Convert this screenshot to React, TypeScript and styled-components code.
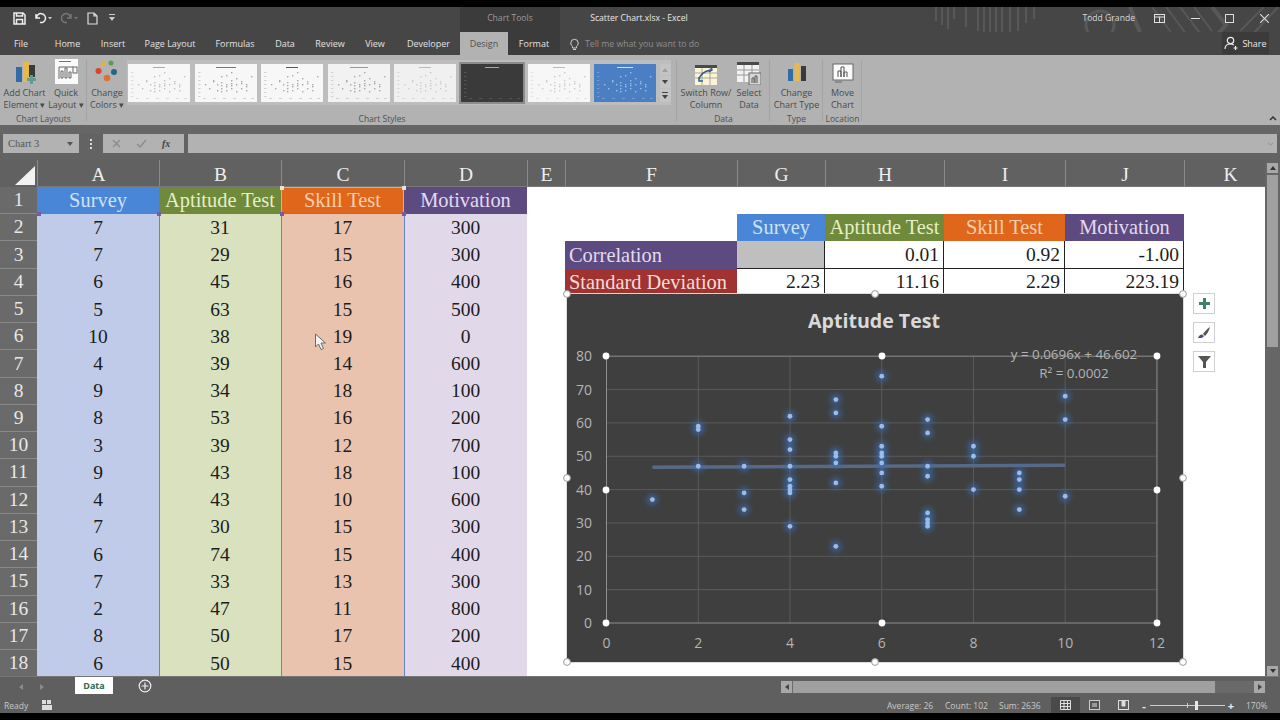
import React from "react";
import styled, { createGlobalStyle } from "styled-components";

const Global = createGlobalStyle`
  html, body { margin: 0; padding: 0; background: #000; }
  #root { width: 1280px; height: 720px; overflow: hidden; }
  * { box-sizing: border-box; }
`;

const UI = `"Open Sans", "Noto Sans", "Liberation Sans", sans-serif`;
const SERIF = `"Liberation Serif", "Times New Roman", serif`;

const Screen = styled.div`
  width: 1280px; height: 720px; background: #000; padding: 7px 0;
  display: flex; flex-direction: column; font-family: ${UI}; overflow: hidden;
`;

const TitleBar = styled.div`
  height: 25px; background: #464646; display: flex; align-items: center; padding-bottom: 3px;
  position: relative; color: #e6e6e6; font-size: 8.6px; flex: none;
`;
const QuickAccess = styled.div`
  width: 460px; flex: none; display: flex; align-items: center; gap: 0; padding-left: 13px; height: 100%;
`;
const QuickBtn = styled.span<{ $w: number }>`
  width: ${p => p.$w}px; display: flex; align-items: center; flex: none;
`;
const ToolsLabel = styled.div`
  width: 100px; height: 25px; margin-bottom: -3px; padding-bottom: 3px; background: #3b3b3b; color: #9a9a9a; display: flex;
  align-items: center; justify-content: center; flex: none;
`;
const DocTitle = styled.div`
  width: 158px; text-align: center; color: #e8e8e8; flex: none;
`;
const Deco = styled.svg`
  position: absolute; left: 930px; top: 0; width: 350px; height: 48px; pointer-events: none;
`;
const WindowArea = styled.div`
  margin-left: auto; display: flex; align-items: center; position: relative; height: 100%;
`;
const UserName = styled.span`
  color: #d8d8d8; margin-right: 3px; white-space: nowrap;
`;
const WinBtn = styled.span<{ $w: number }>`
  width: ${p => p.$w}px; display: flex; justify-content: center; align-items: center;
`;

const TabBar = styled.div`
  height: 23px; background: #464646; display: flex; align-items: stretch; flex: none;
  font-size: 9px; color: #e2e2e2; position: relative;
`;
const Tab = styled.div<{ $w: number; $state?: "active" | "context" }>`
  width: ${p => p.$w}px; flex: none; display: flex; align-items: center; justify-content: center;
  background: ${p => (p.$state === "active" ? "#b2b2b2" : p.$state === "context" ? "#3b3b3b" : "transparent")};
  color: ${p => (p.$state === "active" ? "#505050" : "#e2e2e2")};
`;
const TellMe = styled.div`
  display: flex; align-items: center; gap: 6px; margin-left: 10px; color: #8e8e8e; font-size: 8.7px; position: relative;
`;
const ShareBtn = styled.div`
  position: absolute; left: 1222px; top: 0; width: 47px; height: 22px; background: #3b3b3b;
  display: flex; align-items: center; justify-content: center; gap: 3px; color: #e8e8e8;
`;

const Ribbon = styled.div`
  height: 70px; background: #b2b2b2; display: flex; flex: none; position: relative; color: #4a4a4a; font-size: 9px;
`;
const Group = styled.div<{ $w: number }>`
  width: ${p => p.$w}px; flex: none; display: flex; flex-direction: column; height: 100%;
  position: relative;
  &::after {
    content: ""; position: absolute; right: 0; top: 5px; bottom: 4px; width: 1px; background: #a3a3a3;
  }
`;
const GroupBody = styled.div`
  flex: 1; display: flex; align-items: flex-start; min-height: 0;
`;
const GroupLabel = styled.div`
  height: 13px; line-height: 13px; text-align: center; color: #4f4f4f; font-size: 8.5px; white-space: nowrap;
`;
const RibbonBtn = styled.div<{ $w: number }>`
  width: ${p => p.$w}px; flex: none; display: flex; flex-direction: column; align-items: center;
  padding-top: 4px; line-height: 12px; text-align: center; white-space: nowrap;
`;
const IconSlot = styled.div`
  height: 28px; display: flex; align-items: flex-start;
`;
const Gallery = styled.div`
  display: flex; margin-top: 5px; background: #bdbdbd; padding: 4px 0 3px 1px; height: 45px; align-items: stretch;
`;
const Thumb = styled.div<{ $bg: string; $sel?: boolean }>`
  width: 62px; height: 38px; margin-right: 4.6px; background: ${p => p.$bg}; flex: none; line-height: 0;
  outline: ${p => (p.$sel ? "2px solid #8c8c8c" : "none")};
`;
const GalleryScroll = styled.div`
  width: 11px; display: flex; flex-direction: column; margin-left: -1px; gap: 1px; color: #444;
`;
const ScrollCell = styled.div<{ $h: number }>`
  height: ${p => p.$h}px; background: #c4c4c4; display: flex; align-items: center; justify-content: center;
`;
const Collapse = styled.svg`
  position: absolute; right: 3px; bottom: 4px;
`;

const Gap = styled.div<{ $h: number }>`
  height: ${p => p.$h}px; background: #666; flex: none;
`;
const FormulaBar = styled.div`
  height: 19px; background: #636363; display: flex; align-items: stretch; flex: none; position: relative;
`;
const NameBox = styled.div`
  width: 76px; margin-left: 3px; background: #b2b2b2; color: #555; font-family: ${SERIF}; font-size: 10.5px;
  display: flex; align-items: center; justify-content: space-between; padding: 0 6px 0 5px;
`;
const Dots = styled.div`
  width: 24px; display: flex; align-items: center; justify-content: center;
`;
const FxBox = styled.div`
  width: 81px; background: #b2b2b2; display: flex; align-items: center; padding-left: 9px; gap: 15px; color: #888;
`;
const FxText = styled.i`
  font-family: ${SERIF}; font-size: 10px; font-weight: 700; color: #444;
`;
const FormulaInput = styled.div`
  width: 1089px; margin-left: 4px; background: #b2b2b2; display: flex; align-items: center; justify-content: flex-end; padding-right: 3px;
`;

const SheetRow = styled.div`
  display: flex; height: 523px; flex: none; background: #636363; padding-top: 7px;
`;
const Sheet = styled.div`
  width: 1265px; flex: none; position: relative; overflow: hidden; display: grid; height: 516px;
  grid-template-columns: 37px 122px 122px 123px 123px 38px 172px 88px 119px 121px 119px 92px;
  grid-template-rows: 27px repeat(18, 27.24px);
  background: #fff; font-family: ${SERIF};
`;
const Corner = styled.div`
  background: #616161; position: relative; overflow: hidden;
  &::after {
    content: ""; position: absolute; right: 2px; bottom: 2px; width: 0; height: 0;
    border-style: solid; border-width: 0 0 19px 20px; border-color: transparent transparent #f2f2f2 transparent;
  }
`;
const ColHead = styled.div`
  background: #616161; color: #eee; font-size: 19.5px; display: flex; align-items: center; justify-content: center;
  border-left: 1px solid #8a8a8a; border-bottom: 1px solid #777; padding-top: 3px;
`;
const RowHead = styled.div`
  background: #6a6a6a; color: #e8e8e8; font-size: 19.5px; display: flex; align-items: center; justify-content: center;
  border-bottom: 1px solid #8a8a8a;
`;
const Cell = styled.div<{ $bg?: string; $color?: string; $align?: string; $boxed?: boolean; $edge?: string; $label?: boolean }>`
  background: ${p => p.$bg || "#fff"}; color: ${p => p.$color || "#1c1c1c"};
  font-size: ${p => (p.$label ? "20.4px" : "19.5px")};
  display: flex; align-items: center; white-space: nowrap; overflow: hidden;
  justify-content: ${p => (p.$align === "right" ? "flex-end" : p.$align === "left" ? "flex-start" : "center")};
  padding: 0 4px;
  ${p => (p.$boxed ? "border-right: 1px solid #222; border-bottom: 1px solid #222;" : "")}
  ${p => (p.$edge ? `border-left: 1px solid ${p.$edge};` : "")}
`;
const SelectedHeader = styled(Cell)`
  border: 1px solid #f0a878; border-bottom-color: #b0607a; border-radius: 1px;
`;
const RangeHandle = styled.span<{ $x: number; $y: number; $c: string }>`
  position: absolute; left: ${p => p.$x}px; top: ${p => p.$y}px; width: 4px; height: 4px; background: ${p => p.$c};
`;
const RangeLine = styled.span<{ $x: number }>`
  position: absolute; left: ${p => p.$x}px; top: 54px; width: 1px; height: 462px; background: #5f86cf;
`;
const ChartFrame = styled.div`
  position: absolute; left: 567px; top: 134px; width: 616px; height: 368px; background: #3f3f3f;
  box-shadow: 0 0 0 1px #dcdcdc;
`;
const ChartSvg = styled.svg`
  position: absolute; left: 0; top: 0; overflow: visible;
`;
const SideBtn = styled.div<{ $y: number }>`
  position: absolute; left: 1193px; top: ${p => p.$y}px; width: 22px; height: 21px; background: #fff;
  border: 1px solid #cfcfcf; display: flex; align-items: center; justify-content: center;
`;
const Cursor = styled.svg`
  position: absolute; left: 314px; top: 173px;
`;
const VScroll = styled.div`
  width: 15px; flex: none; margin-top: 3px; display: flex; flex-direction: column; align-items: center; background: #666;
`;
const VBtn = styled.div`
  width: 11px; height: 10px; background: #a8a8a8; display: flex; align-items: center; justify-content: center; flex: none;
`;
const VThumb = styled.div`
  width: 11px; height: 172px; background: #a0a0a0; margin-top: 2px; flex: none;
`;
const VSpace = styled.div`
  flex: 1;
`;

const SheetTabs = styled.div`
  height: 21px; background: #5f5f5f; display: flex; align-items: flex-start; flex: none; position: relative;
  border-top: 1px solid #767676;
`;
const NavArrows = styled.div`
  width: 75px; height: 100%; display: flex; align-items: center; padding-left: 19px; gap: 17px;
`;
const ActiveSheet = styled.div`
  width: 38px; height: 17px; background: #fff; color: #2f6b52; font-weight: 700; font-size: 9px;
  display: flex; align-items: center; justify-content: center; flex: none;
`;
const AddSheet = styled.div`
  width: 64px; display: flex; justify-content: center; padding-top: 2px; flex: none;
`;
const HScrollArea = styled.div`
  position: absolute; left: 781px; top: 4px; width: 484px; height: 12px; background: #6a6a6a; display: flex; align-items: stretch;
`;
const HBtn = styled.div`
  width: 11px; background: #a8a8a8; display: flex; align-items: center; justify-content: center; flex: none;
`;
const HThumb = styled.div`
  width: 422px; background: #a0a0a0; margin-left: 1px; flex: none;
`;
const StatusBar = styled.div`
  height: 16px; background: #5f5f5f; flex: none; display: flex; align-items: center; color: #c9c9c9; font-size: 8.5px; position: relative;
`;
const Ready = styled.span`
  width: 42px; padding-left: 4px; flex: none;
`;
const StatusRight = styled.div`
  position: absolute; left: 887px; top: 0; height: 100%; display: flex; align-items: center;
`;
const Stat = styled.span<{ $w: number }>`
  width: ${p => p.$w}px; flex: none; white-space: nowrap;
`;
const ViewBtn = styled.span<{ $active?: boolean }>`
  width: 29px; height: 100%; display: flex; align-items: center; justify-content: center; flex: none;
  background: ${p => (p.$active ? "#4a4a4a" : "transparent")};
`;
const ZoomTrack = styled.div`
  width: 75px; height: 1px; background: #cfcfcf; margin: 0 2px; position: relative; flex: none;
  &::before { content: ""; position: absolute; left: 37px; top: -2px; width: 1px; height: 5px; background: #cfcfcf; }
`;
const ZoomThumb = styled.span`
  position: absolute; left: 45px; top: -4px; width: 3px; height: 9px; background: #e8e8e8;
`;
const ZoomSign = styled.span<{ $lead?: number }>`
  width: 8px; margin-left: ${p => p.$lead || 0}px; text-align: center; color: #e8e8e8; font-size: 11px; font-weight: 700; flex: none;
`;
const ZoomPct = styled.span`
  margin-left: 11px; flex: none;
`;

const cols = ["A", "B", "C", "D", "E", "F", "G", "H", "I", "J", "K"];
const A = [7, 7, 6, 5, 10, 4, 9, 8, 3, 9, 4, 7, 6, 7, 2, 8, 6];
const B = [31, 29, 45, 63, 38, 39, 34, 53, 39, 43, 43, 30, 74, 33, 47, 50, 50];
const C = [17, 15, 16, 15, 19, 14, 18, 16, 12, 18, 10, 15, 15, 13, 11, 17, 15];
const D = [300, 300, 400, 500, 0, 600, 100, 200, 700, 100, 600, 300, 400, 300, 800, 200, 400];

const hdr = { survey: "#4a86d8", apt: "#6e8a3a", skill: "#e0661c", mot: "#5d4a80" };
const ink = { survey: "#cfe2f7", apt: "#e6efc8", skill: "#f7cfae", mot: "#e4daf0", dev: "#f7dcd2" };

const points: [number, number][] = [
  [1, 37], [2, 59], [2, 58], [2, 47], [3, 47], [3, 39], [3, 34], [4, 62], [4, 55], [4, 52], [4, 47], [4, 43], [4, 41], [4, 40], [4, 39], [4, 29],
  [5, 67], [5, 63], [5, 51], [5, 50], [5, 48], [5, 42], [5, 23], [6, 74], [6, 59], [6, 53], [6, 51], [6, 50], [6, 48], [6, 45], [6, 41],
  [7, 61], [7, 57], [7, 47], [7, 44], [7, 33], [7, 31], [7, 30], [7, 29], [8, 53], [8, 50], [8, 40], [9, 45], [9, 43], [9, 40], [9, 34], [10, 68], [10, 61], [10, 38],
];
const px = (x: number) => 606.5 + x * 45.87;
const py = (y: number) => 623 - y * 3.335;

const Handle = ({ x, y }: { x: number; y: number }) => <circle cx={x} cy={y} r={3.4} fill="#fff" stroke="#9a9a9a" strokeWidth={1} />;
const PlotHandle = ({ x, y }: { x: number; y: number }) => <circle cx={x} cy={y} r={3.4} fill="#fff" />;

const Chart = () => (
  <ChartFrame>
    <ChartSvg width={616} height={368} viewBox="567 294 616 368" fontFamily={UI}>
      <defs>
        <filter id="glow" x="-150%" y="-150%" width="400%" height="400%"><feGaussianBlur stdDeviation="3" /></filter>
      </defs>
      <text x={874} y={328} textAnchor="middle" fontSize={19.6} fontWeight={700} fill="#d9d9d9">Aptitude Test</text>
      {[10, 20, 30, 40, 50, 60, 70].map(v => <line key={v} x1={px(0)} x2={px(12)} y1={py(v)} y2={py(v)} stroke="#5b5b5b" strokeWidth={1} />)}
      {[2, 4, 6, 8, 10].map(v => <line key={v} x1={px(v)} x2={px(v)} y1={py(80)} y2={py(0)} stroke="#5b5b5b" strokeWidth={1} />)}
      <rect x={px(0)} y={py(80)} width={px(12) - px(0)} height={py(0) - py(80)} fill="none" stroke="#8e8e8e" strokeWidth={1} />
      <line x1={px(1)} x2={px(10)} y1={py(46.67)} y2={py(47.3)} stroke="#566a88" strokeWidth={3.5} />
      {[0, 10, 20, 30, 40, 50, 60, 70, 80].map(v => <text key={v} x={592} y={py(v) + 5} textAnchor="end" fontSize={14} fill="#b4b4b4">{v}</text>)}
      {[0, 2, 4, 6, 8, 10, 12].map(v => <text key={v} x={px(v)} y={648} textAnchor="middle" fontSize={14} fill="#b4b4b4">{v}</text>)}
      <g filter="url(#glow)">
        {points.map(([x, y], i) => <circle key={i} cx={px(x)} cy={py(y)} r={4.5} fill="#3a6fb8" />)}
      </g>
      {points.map(([x, y], i) => <circle key={i} cx={px(x)} cy={py(y)} r={2.4} fill="#9dbbe8" />)}
      <text x={1074} y={359} textAnchor="middle" fontSize={13.4} fill="#b4b4b4">y = 0.0696x + 46.602</text>
      <text x={1074} y={378} textAnchor="middle" fontSize={13.4} fill="#b4b4b4">R² = 0.0002</text>
      {[606, 882, 1157].map(x => [356, 490, 623].map(y => (x === 882 && y === 490 ? null : <PlotHandle key={`${x}${y}`} x={x} y={y} />)))}
      {[567, 875, 1183].map(x => [294, 478, 662].map(y => (x === 875 && y === 478 ? null : <Handle key={`${x}${y}`} x={x} y={y} />)))}
    </ChartSvg>
  </ChartFrame>
);

const miniDots: [number, number][] = [
  [10, 20], [14, 24], [18, 16], [18, 17], [22, 26], [22, 20], [26, 12], [26, 18], [26, 21], [26, 24], [26, 27], [31, 11], [31, 20], [31, 22], [31, 26],
  [36, 8], [36, 16], [36, 19], [36, 21], [36, 24], [41, 14], [41, 20], [41, 27], [46, 17], [46, 19], [46, 24], [51, 20], [51, 22], [51, 26], [56, 12],
];
const MiniChart = ({ dot, title, axis, tw }: { dot: string; title: string; axis: string; tw: number }) => (
  <svg width={62} height={38} viewBox="0 0 62 38">
    <rect x={31 - tw / 2} y={3} width={tw} height={1} fill={title} />
    {[8, 12, 16, 20, 24, 28, 32].map(y => <rect key={y} x={3} y={y} width={2.5} height={0.8} fill={axis} />)}
    {[8, 18, 28, 38, 48, 56].map(x => <rect key={x} x={x} y={34} width={3} height={0.8} fill={axis} />)}
    {miniDots.map(([x, y], i) => <rect key={i} x={x} y={y} width={1.4} height={1.4} fill={dot} />)}
  </svg>
);

const thumbs = [
  { bg: "#f7f7f7", dot: "#c2c2c2", title: "#aaa", axis: "#d4d4d4", tw: 12 },
  { bg: "#f7f7f7", dot: "#a8a8a8", title: "#777", axis: "#c8c8c8", tw: 20 },
  { bg: "#f7f7f7", dot: "#ababab", title: "#555", axis: "#c8c8c8", tw: 12 },
  { bg: "#f2f2f2", dot: "#a8a8a8", title: "#999", axis: "#c8c8c8", tw: 18 },
  { bg: "#f0f0f0", dot: "#cccccc", title: "#bbb", axis: "#d4d4d4", tw: 12 },
  { bg: "#3a3a3a", dot: "#3a3a3a", title: "#aaa", axis: "#5a5a5a", tw: 14, sel: true },
  { bg: "#f7f7f7", dot: "#cccccc", title: "#bbb", axis: "#dedede", tw: 12 },
  { bg: "#4a7fc4", dot: "#9dbde6", title: "#cfe0f5", axis: "#7fa3d6", tw: 16 },
];

const cellsFor = (r: number) => {
  const i = r - 2;
  const data = [
    <Cell key="a" $bg="#bfcbe9">{A[i]}</Cell>,
    <Cell key="b" $bg="#d9e1bf">{B[i]}</Cell>,
    <Cell key="c" $bg="#eac3ae">{C[i]}</Cell>,
    <Cell key="d" $bg="#e1d9ea">{D[i]}</Cell>,
    <Cell key="e" />,
  ];
  let rest: React.ReactNode[];
  if (r === 2) {
    rest = [
      <Cell key="f" />,
      <Cell key="g" $label $bg={hdr.survey} $color={ink.survey}>Survey</Cell>,
      <Cell key="h" $label $bg={hdr.apt} $color={ink.apt}>Aptitude Test</Cell>,
      <Cell key="i" $label $bg={hdr.skill} $color={ink.skill}>Skill Test</Cell>,
      <Cell key="j" $label $bg={hdr.mot} $color={ink.mot}>Motivation</Cell>,
    ];
  } else if (r === 3) {
    rest = [
      <Cell key="f" $label $bg={hdr.mot} $color={ink.mot} $align="left">Correlation</Cell>,
      <Cell key="g" $bg="#bfbfbf" $boxed />,
      <Cell key="h" $align="right" $boxed>0.01</Cell>,
      <Cell key="i" $align="right" $boxed>0.92</Cell>,
      <Cell key="j" $align="right" $boxed>-1.00</Cell>,
    ];
  } else if (r === 4) {
    rest = [
      <Cell key="f" $label $bg="#a03232" $color={ink.dev} $align="left">Standard Deviation</Cell>,
      <Cell key="g" $align="right" $boxed>2.23</Cell>,
      <Cell key="h" $align="right" $boxed>11.16</Cell>,
      <Cell key="i" $align="right" $boxed>2.29</Cell>,
      <Cell key="j" $align="right" $boxed>223.19</Cell>,
    ];
  } else {
    rest = ["f", "g", "h", "i", "j"].map(k => <Cell key={k} />);
  }
  return [...data, ...rest, <Cell key="k" />];
};

const TabsList: [string, number][] = [["File", 42], ["Home", 51], ["Insert", 40], ["Page Layout", 74], ["Formulas", 56], ["Data", 44], ["Review", 46], ["View", 44], ["Developer", 63]];

export default function App() {
  return (
    <>
      <Global />
      <Screen>
        <TitleBar>
          <Deco viewBox="0 0 350 48" fill="none" stroke="#585858">
            <path d="M6 0v14M12 0v18M18 0v22M24 0v12M36 0v20M48 0v24M54 0v26M60 0v30M66 0v32M72 0v30M80 0v26M88 0v24M96 0v16M104 0v12" strokeWidth={2} />
            <circle cx={170} cy={18} r={14} strokeWidth={3} />
            <path d="M200 0l14 36 24 8h34l24-26-14-18" strokeWidth={4} />
            <path d="M222 0l30 40M236 0l30 40M250 0l26 34M264 0l18 24M310 24l24-24M322 28l26-28" strokeWidth={2} />
          </Deco>
          <QuickAccess>
            <QuickBtn $w={21}><svg width={13} height={13} viewBox="0 0 13 13" fill="none" stroke="#eee" strokeWidth={1.5}><path d="M1 1h9l2 2v9H1z" /><path d="M3.5 1v3h6V1M3.5 12V7.5h6V12" /></svg></QuickBtn>
            <QuickBtn $w={26}><svg width={19} height={12} viewBox="0 0 19 12" fill="none" stroke="#eee" strokeWidth={1.5}><path d="M2 2v4h4M2.5 6A4.5 4.5 0 1 1 6 10.5" /><path d="M14 5h4l-2 2.5z" fill="#ccc" stroke="none" /></svg></QuickBtn>
            <QuickBtn $w={27}><svg width={19} height={12} viewBox="0 0 19 12" fill="none" stroke="#777" strokeWidth={1.5}><path d="M11 2v4H7M10.5 6A4.5 4.5 0 1 0 7 10.5" /><path d="M14 5h4l-2 2.5z" fill="#777" stroke="none" /></svg></QuickBtn>
            <QuickBtn $w={22}><svg width={11} height={13} viewBox="0 0 11 13" fill="none" stroke="#ddd" strokeWidth={1.2}><path d="M1 1h6l3 3v8H1zM7 1v3h3" /></svg></QuickBtn>
            <QuickBtn $w={10}><svg width={6} height={8} viewBox="0 0 6 8" fill="#ccc"><rect y={0} width={6} height={1} /><path d="M0 3h6L3 7z" /></svg></QuickBtn>
          </QuickAccess>
          <ToolsLabel>Chart Tools</ToolsLabel>
          <DocTitle>Scatter Chart.xlsx - Excel</DocTitle>
          <WindowArea>
            <UserName>Todd Grande</UserName>
            <WinBtn $w={42}><svg width={11} height={9} viewBox="0 0 11 9" fill="none" stroke="#e0e0e0"><rect x={0.5} y={0.5} width={10} height={8} /><path d="M0 3h11M5.5 3v5" /></svg></WinBtn>
            <WinBtn $w={30}><svg width={9} height={2}><rect width={9} height={1} y={1} fill="#ddd" /></svg></WinBtn>
            <WinBtn $w={38}><svg width={9} height={9} fill="none" stroke="#ddd"><rect x={0.5} y={0.5} width={8} height={8} /></svg></WinBtn>
            <WinBtn $w={32}><svg width={9} height={9} stroke="#ddd" strokeWidth={1.1}><path d="M0 0l9 9M9 0L0 9" /></svg></WinBtn>
          </WindowArea>
        </TitleBar>
        <TabBar>
          {TabsList.map(([t, w]) => <Tab key={t} $w={w}>{t}</Tab>)}
          <Tab $w={48} $state="active">Design</Tab>
          <Tab $w={52} $state="context">Format</Tab>
          <TellMe>
            <svg width={9} height={12} viewBox="0 0 9 12" fill="none" stroke="#cfcfcf"><path d="M2.5 8.5C1.5 7.5.8 6.5.8 5a3.7 3.7 0 0 1 7.4 0c0 1.500-.7 2.500-1.700 3.500V10h-4zM3 11.500h3" /></svg>
            Tell me what you want to do
          </TellMe>
          <ShareBtn>
            <svg width={15} height={15} viewBox="0 0 15 15" fill="none" stroke="#eee" strokeWidth={1.2}><circle cx={6.500} cy={4.500} r={3.200} /><path d="M1 13c0-3 2-5 5.500-5 1.500 0 2.500.3 3.300 1M11.500 10v4M9.500 12h4" /></svg>
            Share
          </ShareBtn>
        </TabBar>
        <Ribbon>
          <Group $w={87}>
            <GroupBody>
              <RibbonBtn $w={47} style={{ marginLeft: 1 }}>
                <IconSlot>
                  <svg width={24} height={26} viewBox="0 0 24 26"><rect x={3} y={8} width={6} height={15} fill="#2f6ca8" /><rect x={10} y={3} width={6} height={20} fill="#e6b94e" /><rect x={16} y={6} width={6} height={12} fill="#3a3a3a" /><path d="M17 16h3v3h3v3h-3v3h-3v-3h-3v-3h3z" fill="#5e9c96" /></svg>
                </IconSlot>
                <span>Add Chart</span>
                <span>Element ▾</span>
              </RibbonBtn>
              <RibbonBtn $w={36}>
                <IconSlot>
                  <svg width={23} height={25} viewBox="0 0 23 25"><rect width={23} height={25} fill="#fafafa" /><rect x={4} y={2} width={12} height={1} fill="#777" /><path d="M4 20V8h14M6 19v-7h2v7zM10 19V9h2v10zM14 19v-6h2v6z" fill="none" stroke="#666" /><rect x={18} y={8} width={4} height={6} fill="none" stroke="#666" /></svg>
                </IconSlot>
                <span>Quick</span>
                <span>Layout ▾</span>
              </RibbonBtn>
            </GroupBody>
            <GroupLabel>Chart Layouts</GroupLabel>
          </Group>
          <Group $w={590}>
            <GroupBody>
              <RibbonBtn $w={40}>
                <IconSlot>
                  <svg width={24} height={24} viewBox="0 0 24 24"><circle cx={8} cy={5} r={2.500} fill="#e4b33c" /><circle cx={16} cy={4} r={2.500} fill="#5b9b5a" /><circle cx={3.500} cy={12} r={3} fill="#d8442e" /><circle cx={19} cy={13} r={3} fill="#27647f" /><circle cx={12} cy={19} r={3.300} fill="#e2702c" /></svg>
                </IconSlot>
                <span>Change</span>
                <span>Colors ▾</span>
              </RibbonBtn>
              <Gallery>
                {thumbs.map((t, i) => (
                  <Thumb key={i} $bg={t.bg} $sel={t.sel}>
                    <MiniChart dot={t.dot} title={t.title} axis={t.axis} tw={t.tw} />
                  </Thumb>
                ))}
                <GalleryScroll>
                  <ScrollCell $h={11}><svg width={6} height={4}><path d="M0 4l3-4 3 4z" fill="#a0a0a0" /></svg></ScrollCell>
                  <ScrollCell $h={12}><svg width={6} height={4}><path d="M0 0l3 4 3-4z" fill="#444" /></svg></ScrollCell>
                  <ScrollCell $h={13}><svg width={6} height={7}><rect width={6} height={1} fill="#444" /><path d="M0 3l3 4 3-4z" fill="#444" /></svg></ScrollCell>
                </GalleryScroll>
              </Gallery>
            </GroupBody>
            <GroupLabel>Chart Styles</GroupLabel>
          </Group>
          <Group $w={93}>
            <GroupBody>
              <RibbonBtn $w={58}>
                <IconSlot>
                  <svg width={22} height={20} viewBox="0 0 22 20" style={{ marginTop: 6 }}><rect width={22} height={20} fill="#fbf4d8" /><rect width={22} height={3} fill="#4a4a4a" /><path d="M0 8h22M0 13h22M7 3v17M15 3v17" stroke="#b0a98e" /><path d="M4 15c1-6 6-9 12-10M16 2l1 3-3 2M4 12l0 4 4 0" fill="none" stroke="#2c5d95" strokeWidth={1.500} /></svg>
                </IconSlot>
                <span>Switch Row/</span>
                <span>Column</span>
              </RibbonBtn>
              <RibbonBtn $w={28}>
                <IconSlot>
                  <svg width={24} height={23} viewBox="0 0 24 23" style={{ marginTop: 3 }}><rect width={22} height={20} fill="#f2f2f2" /><rect width={22} height={3} fill="#4a4a4a" /><path d="M0 8h22M0 13h22M7 3v17M15 3v17" stroke="#999" /><rect x={12} y={11} width={12} height={12} fill="#d6d6d6" stroke="#666" /><path d="M15 21v-5h2v5M18 21v-7h2v7" fill="none" stroke="#555" /></svg>
                </IconSlot>
                <span>Select</span>
                <span>Data</span>
              </RibbonBtn>
            </GroupBody>
            <GroupLabel>Data</GroupLabel>
          </Group>
          <Group $w={53}>
            <GroupBody>
              <RibbonBtn $w={53}>
                <IconSlot>
                  <svg width={20} height={22} viewBox="0 0 20 22" style={{ marginTop: 3 }}><rect x={1} y={7} width={5} height={12} fill="#2f6ca8" /><rect x={7.500} y={1} width={5} height={18} fill="#e6b94e" /><rect x={14} y={4} width={5} height={15} fill="#3a3a3a" /></svg>
                </IconSlot>
                <span>Change</span>
                <span>Chart Type</span>
              </RibbonBtn>
            </GroupBody>
            <GroupLabel>Type</GroupLabel>
          </Group>
          <Group $w={39}>
            <GroupBody>
              <RibbonBtn $w={39}>
                <IconSlot>
                  <svg width={22} height={22} viewBox="0 0 22 22" style={{ marginTop: 3 }}><rect x={1} y={2} width={20} height={16} fill="#fafafa" stroke="#666" /><path d="M6 15V9h3v6M9 15V5h3v10M12 15v-5h3v5" fill="none" stroke="#555" /><path d="M3 20h7" stroke="#666" /></svg>
                </IconSlot>
                <span>Move</span>
                <span>Chart</span>
              </RibbonBtn>
            </GroupBody>
            <GroupLabel>Location</GroupLabel>
          </Group>
          <Collapse width={8} height={5} viewBox="0 0 8 5"><path d="M1 4l3-3 3 3" fill="none" stroke="#333" strokeWidth={1.500} /></Collapse>
        </Ribbon>
        <Gap $h={9} />
        <FormulaBar>
          <NameBox>
            Chart 3
            <svg width={6} height={4}><path d="M0 0h6L3 4z" fill="#555" /></svg>
          </NameBox>
          <Dots><svg width={3} height={10} fill="#ddd"><rect width={2} height={2} /><rect y={4} width={2} height={2} /><rect y={8} width={2} height={2} /></svg></Dots>
          <FxBox>
            <svg width={9} height={9} stroke="#8a8a8a" strokeWidth={1.300}><path d="M1 1l7 7M8 1L1 8" /></svg>
            <svg width={11} height={9} stroke="#8a8a8a" strokeWidth={1.300} fill="none"><path d="M1 5l3 3 6-7" /></svg>
            <FxText>fx</FxText>
          </FxBox>
          <FormulaInput><svg width={7} height={4}><path d="M1 1l2.500 2L6 1" fill="none" stroke="#8f8f8f" /></svg></FormulaInput>
        </FormulaBar>
        <SheetRow>
          <Sheet>
            <Corner />
            {cols.map(c => <ColHead key={c}>{c}</ColHead>)}
            <RowHead>1</RowHead>
            <Cell $label $bg={hdr.survey} $color={ink.survey}>Survey</Cell>
            <Cell $label $bg={hdr.apt} $color={ink.apt}>Aptitude Test</Cell>
            <SelectedHeader $label $bg={hdr.skill} $color={ink.skill}>Skill Test</SelectedHeader>
            <Cell $label $bg={hdr.mot} $color={ink.mot}>Motivation</Cell>
            {["e", "f", "g", "h", "i", "j", "k"].map(k => <Cell key={k} />)}
            {Array.from({ length: 17 }, (_, i) => i + 2).map(r => (
              <React.Fragment key={r}>
                <RowHead>{r}</RowHead>
                {cellsFor(r)}
              </React.Fragment>
            ))}
            <RangeLine $x={159} />
            <RangeLine $x={281} />
            <RangeLine $x={404} />
            <RangeHandle $x={37} $y={52} $c="#7a5aa0" />
            <RangeHandle $x={157} $y={52} $c="#7a5aa0" />
            <RangeHandle $x={280} $y={52} $c="#7a5aa0" />
            <RangeHandle $x={402} $y={52} $c="#7a5aa0" />
            <RangeHandle $x={280} $y={26} $c="#f4e0d0" />
            <RangeHandle $x={402} $y={26} $c="#f4e0d0" />
            <Cursor width={13} height={18} viewBox="0 0 13 18"><path d="M1.500 1v13l3-3 2.500 5.500 2.500-1L7 10h4.500z" fill="#f4f4f4" stroke="#6a6a6a" /></Cursor>
            <Chart />
            <SideBtn $y={133}><svg width={11} height={11}><path d="M4 0h3v4h4v3H7v4H4V7H0V4h4z" fill="#3f7f6d" /></svg></SideBtn>
            <SideBtn $y={162}><svg width={14} height={14} viewBox="0 0 14 14"><path d="M13 1C10 3 8 5 6 8l2 2c2-2 4-5 5-9z" fill="#555" /><path d="M5 8.500c-2 0-3 1.500-4 3.500 2 .3 5 0 6-2z" fill="#4a4a80" /></svg></SideBtn>
            <SideBtn $y={191}><svg width={13} height={12} viewBox="0 0 13 12"><path d="M0 0h13L8 6v6H5V6z" fill="#555" /></svg></SideBtn>
          </Sheet>
          <VScroll>
            <VBtn><svg width={6} height={4}><path d="M0 4l3-4 3 4z" fill="#333" /></svg></VBtn>
            <VThumb />
            <VSpace />
            <VBtn><svg width={6} height={4}><path d="M0 0l3 4 3-4z" fill="#333" /></svg></VBtn>
          </VScroll>
        </SheetRow>
        <SheetTabs>
          <NavArrows>
            <svg width={4} height={6}><path d="M4 0L0 3l4 3z" fill="#8a8a8a" /></svg>
            <svg width={4} height={6}><path d="M0 0l4 3-4 3z" fill="#8a8a8a" /></svg>
          </NavArrows>
          <ActiveSheet>Data</ActiveSheet>
          <AddSheet><svg width={14} height={14} viewBox="0 0 14 14" fill="none" stroke="#eee" strokeWidth={1.200}><circle cx={7} cy={7} r={5.800} /><path d="M7 3.500v7M3.500 7h7" /></svg></AddSheet>
          <HScrollArea>
            <HBtn><svg width={4} height={6}><path d="M4 0L0 3l4 3z" fill="#444" /></svg></HBtn>
            <HThumb />
            <VSpace />
            <HBtn><svg width={4} height={6}><path d="M0 0l4 3-4 3z" fill="#444" /></svg></HBtn>
          </HScrollArea>
        </SheetTabs>
        <StatusBar>
          <Ready>Ready</Ready>
          <svg width={10} height={11} viewBox="0 0 10 11" fill="#ddd"><rect width={4} height={4} /><rect x={5} width={4} height={4} /><rect y={5} width={10} height={5} /></svg>
          <StatusRight>
            <Stat $w={58}>Average: 26</Stat>
            <Stat $w={54}>Count: 102</Stat>
            <Stat $w={52}>Sum: 2636</Stat>
            <ViewBtn $active><svg width={11} height={10} fill="none" stroke="#ddd"><path d="M.5.5h10v9H.5zM0 3.500h11M0 6.500h11M4 0v10M7.500 0v10" /></svg></ViewBtn>
            <ViewBtn><svg width={11} height={10} fill="#555" stroke="#ccc"><rect x={.5} y={.5} width={10} height={9} /><rect x={3} y={3} width={5} height={4} fill="#999" stroke="none" /></svg></ViewBtn>
            <ViewBtn><svg width={11} height={10} fill="none" stroke="#ddd"><rect x={.5} y={.5} width={10} height={9} /><path d="M4 0v6h3V0z" fill="#ddd" /></svg></ViewBtn>
            <ZoomSign $lead={2}>-</ZoomSign>
            <ZoomTrack><ZoomThumb /></ZoomTrack>
            <ZoomSign>+</ZoomSign>
            <ZoomPct>170%</ZoomPct>
          </StatusRight>
        </StatusBar>
      </Screen>
    </>
  );
}
